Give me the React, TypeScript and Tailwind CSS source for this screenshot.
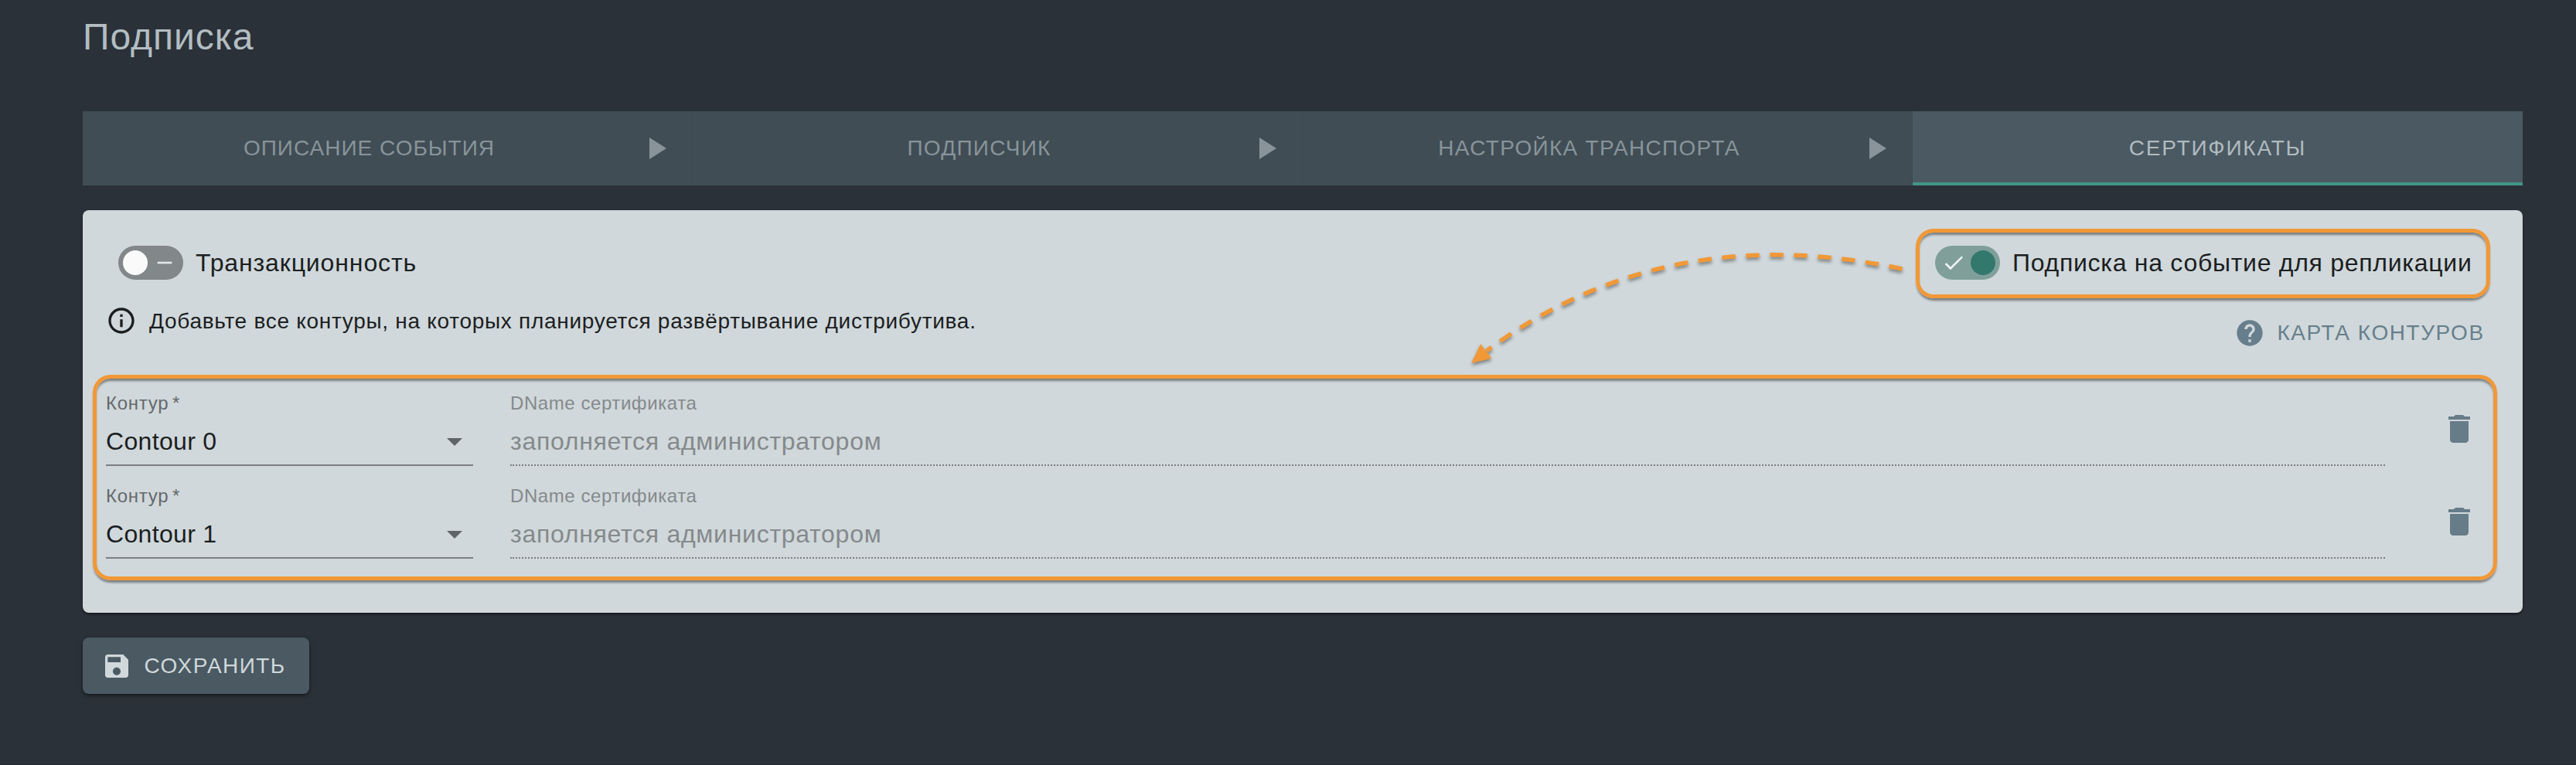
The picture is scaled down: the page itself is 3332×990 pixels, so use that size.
import React from 'react';

const steps = [
  { label: 'ОПИСАНИЕ СОБЫТИЯ', spacing: 'tracking-[1px]' },
  { label: 'ПОДПИСЧИК', spacing: 'tracking-[1.25px]' },
  { label: 'НАСТРОЙКА ТРАНСПОРТА', spacing: 'tracking-[1.29px]' },
];

const contours = ['Contour 0', 'Contour 1'];

function Icon({ d, className }: { d: string; className: string }) {
  return (
    <svg viewBox="0 0 24 24" fill="currentColor" className={`shrink-0 ${className}`}>
      <path d={d} />
    </svg>
  );
}

const icons = {
  play: 'M8 5v14l11-7z',
  remove: 'M19 13H5v-2h14v2z',
  check: 'M21 7L9 19l-5.5-5.5 1.41-1.41L9 16.17 19.59 5.59 21 7z',
  info: 'M11 7h2v2h-2zm0 4h2v6h-2zm1-9C6.48 2 2 6.48 2 12s4.48 10 10 10 10-4.48 10-10S17.52 2 12 2zm0 18c-4.41 0-8-3.59-8-8s3.59-8 8-8 8 3.59 8 8-3.59 8-8 8z',
  help: 'M12 2C6.48 2 2 6.48 2 12s4.48 10 10 10 10-4.48 10-10S17.52 2 12 2zm1 17h-2v-2h2v2zm2.07-7.75l-.9.92C13.45 12.9 13 13.5 13 15h-2v-.5c0-1.1.45-2.1 1.17-2.83l1.24-1.26c.37-.36.59-.86.59-1.41 0-1.1-.9-2-2-2s-2 .9-2 2H8c0-2.21 1.79-4 4-4s4 1.79 4 4c0 .88-.36 1.68-.93 2.25z',
  dropdown: 'M7 10l5 5 5-5z',
  trash: 'M6 19c0 1.1.9 2 2 2h8c1.1 0 2-.9 2-2V7H6v12zM19 4h-3.5l-1-1h-5l-1 1H5v2h14V4z',
  save: 'M17 3H5c-1.11 0-2 .9-2 2v14c0 1.1.89 2 2 2h14c1.1 0 2-.9 2-2V7l-4-4zm-5 16c-1.66 0-3-1.34-3-3s1.34-3 3-3 3 1.34 3 3-1.34 3-3 3zm3-10H5V5h10v4z',
};

function Toggle({ on }: { on: boolean }) {
  if (on) {
    return (
      <div className="flex h-11 w-[84px] shrink-0 items-center justify-between rounded-full bg-[#809f9b] pl-2 pr-1.5">
        <Icon d={icons.check} className="size-8 text-[#f0f3f4]" />
        <div className="size-8 rounded-full bg-[#33786c]" />
      </div>
    );
  }
  return (
    <div className="flex h-11 w-[84px] shrink-0 items-center justify-between rounded-full bg-[#828789] pl-1.5 pr-2">
      <div className="size-8 rounded-full bg-[#fafafa]" />
      <Icon d={icons.remove} className="size-8 text-[#e3e7e9]" />
    </div>
  );
}

function ContourRow({ name }: { name: string }) {
  return (
    <div className="flex h-[120px] pt-4">
      <div className="flex h-[97px] w-[475px] flex-col border-b-2 border-[#7b7f82]">
        <div className="h-8 text-2xl leading-8 tracking-[0.74px] text-[#65696b]">
          Контур<span className="ml-[4.5px]">*</span>
        </div>
        <div className="mt-[13px] flex h-10 items-center justify-between">
          <span className="text-[32px] leading-10 tracking-[0.33px] text-[#1c1e1f]">{name}</span>
          <Icon d={icons.dropdown} className="size-12 text-[#5f6467]" />
        </div>
      </div>
      <div className="ml-12 flex h-[97px] w-[2425px] flex-col border-b-2 border-dotted border-[#7b7f82] text-[#85898b]">
        <div className="h-8 text-2xl leading-8 tracking-[0.57px]">DName сертификата</div>
        <div className="mt-[13px] text-[32px] leading-10 tracking-[0.72px]">заполняется администратором</div>
      </div>
      <Icon d={icons.trash} className="ml-[72px] mt-[25px] size-12 text-[#677c89]" />
    </div>
  );
}

export default function App() {
  return (
    <div className="flex h-[990px] w-[3332px] flex-col border-b border-[#252a33] bg-[#2a3138] pl-[107px] pr-[69px] font-['Liberation_Sans',Arial,sans-serif]">
      <h1 className="h-36 pt-4 text-5xl leading-[64px] tracking-[0.98px] text-[#b3bdc2]">Подписка</h1>

      <nav className="grid h-24 grid-cols-4 text-[28px]">
        {steps.map((s) => (
          <div key={s.label} className="flex items-center border-r border-[#3d4a52] bg-[#404d55] pl-6 pr-[23px] text-[#88949a]">
            <span className={`flex-1 text-center ${s.spacing}`}>{s.label}</span>
            <Icon d={icons.play} className="size-12" />
          </div>
        ))}
        <div className="flex items-center justify-center border-b-4 border-[#439587] bg-[#4a5962] pt-1 tracking-[1.8px] text-[#b0bbc0]">
          СЕРТИФИКАТЫ
        </div>
      </nav>

      <main className="relative mt-8 h-[521px] rounded-lg bg-[#d0d8db] shadow-[0_2px_3px_rgba(0,0,0,0.5)]">
        <div className="flex h-[213px] justify-between pr-[42px] pt-6 text-[#1c1e1f]">
          <div className="flex flex-col gap-8 pl-[30px] pt-[22px]">
            <div className="flex items-center gap-4 pl-4">
              <Toggle on={false} />
              <span className="text-[32px] leading-10 tracking-[0.88px]">Транзакционность</span>
            </div>
            <div className="flex items-center gap-4">
              <Icon d={icons.info} className="size-10" />
              <span className="pt-0.5 text-[28px] leading-10 tracking-[0.716px]">
                Добавьте все контуры, на которых планируется развёртывание дистрибутива.
              </span>
            </div>
          </div>
          <div className="w-[743px]">
            <div className="flex h-[90px] items-center gap-4 rounded-[23px] border-[5px] border-[#f19837] pb-0.5 pl-5 shadow-[0_4px_3px_-1px_rgba(0,0,0,0.42),inset_0_4px_3px_-1px_rgba(0,0,0,0.42)]">
              <Toggle on />
              <span className="whitespace-nowrap text-[32px] leading-10 tracking-[0.72px]">Подписка на событие для репликации</span>
            </div>
            <div className="mt-[25px] flex items-center gap-[15.5px] pl-[412px] text-[#677f8c]">
              <Icon d={icons.help} className="size-10" />
              <span className="whitespace-nowrap text-[28px] leading-10 tracking-[1.55px]">КАРТА КОНТУРОВ</span>
            </div>
          </div>
        </div>

        <section className="ml-[13px] h-[266px] w-[3110px] rounded-[23px] border-[5px] border-[#f19837] pl-3 shadow-[0_4px_3px_-1px_rgba(0,0,0,0.42),inset_0_4px_3px_-1px_rgba(0,0,0,0.42)]">
          {contours.map((c) => (
            <ContourRow key={c} name={c} />
          ))}
        </section>

        <svg
          viewBox="1880 300 640 190"
          className="absolute left-[1773px] top-7 h-[190px] w-[640px] drop-shadow-[0_3px_2px_rgba(0,0,0,0.4)]"
        >
          <path
            d="M2460.5 348Q2154.8 282.3 1923 454"
            fill="none"
            stroke="#f19837"
            strokeWidth="5.5"
            strokeDasharray="17.3 13.7"
          />
          <path d="M1903.3 470L1915.1 445L1929.4 463.7Z" fill="#f19837" />
        </svg>
      </main>

      <button className="mt-8 flex h-[73px] w-[293px] items-center gap-[16px] rounded-lg bg-[#4a5962] pl-[23.5px] text-[#d0d8db] shadow-[0_2px_5px_rgba(0,0,0,0.5)]">
        <Icon d={icons.save} className="size-10" />
        <span className="text-[28px] leading-10 tracking-[1.45px]">СОХРАНИТЬ</span>
      </button>
    </div>
  );
}
